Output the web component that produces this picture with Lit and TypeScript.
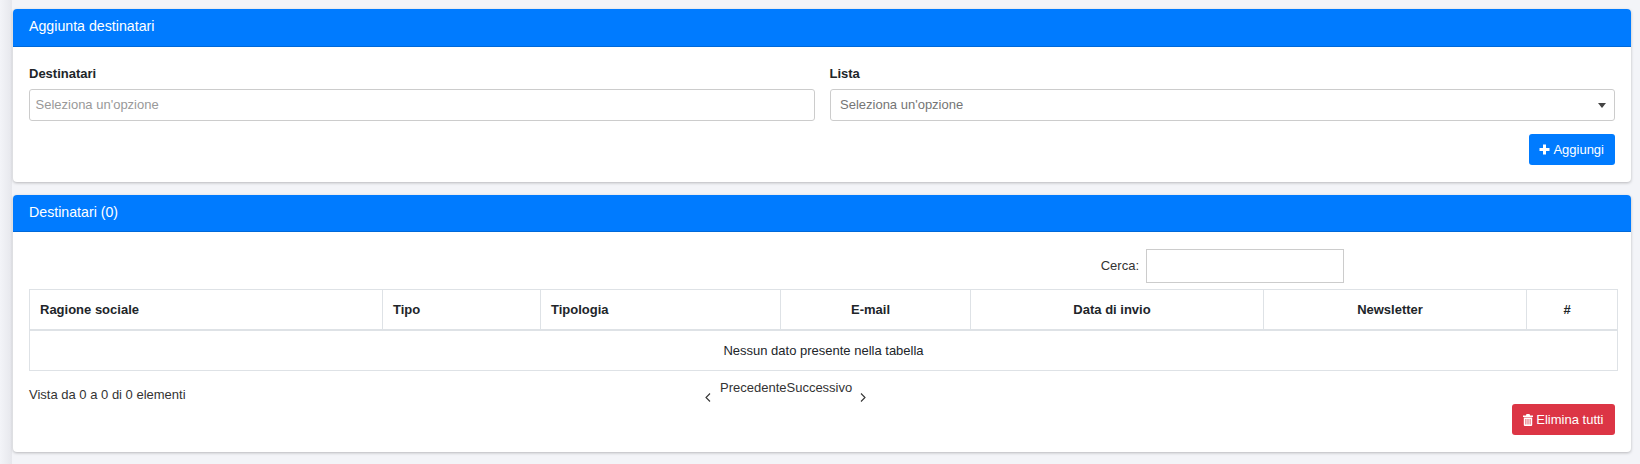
import { LitElement, html, css } from "lit";
import { customElement } from "lit/decorators.js";

@customElement("app-root")
export class AppRoot extends LitElement {
  static styles = css`
    :host { display: block; height: 464px; overflow: hidden; background: #f3f4f8; font-family: "Liberation Sans", Arial, sans-serif; font-size: 13px; color: #212529; position: relative; }
    .edge { position: absolute; left: 0; top: 0; bottom: 0; width: 12px; background: linear-gradient(to right, #f3f4f8, #e6e7ec); }
    .page { position: relative; padding: 9px 9px 0 13px; display: flex; flex-direction: column; gap: 13px; }
    .card { background: #fff; border-radius: 4px; box-shadow: 0 1px 3px rgba(0,0,0,.25); overflow: hidden; }
    .head { background: #007bff; color: #fff; height: 37.5px; padding: 0 16px 2px; display: flex; align-items: center; font-size: 14.2px; border-bottom: 1px solid #0069d9; box-sizing: border-box; }
    .head.short { height: 37px; }
    .body1 { height: 135.5px; box-sizing: border-box; padding: 19.5px 16px 0; }
    .cols { display: grid; grid-template-columns: 1fr 1fr; gap: 15px; }
    label { display: block; font-weight: 700; font-size: 13px; line-height: 16px; margin-bottom: 7px; }
    .field { height: 32px; box-sizing: border-box; border: 1px solid #ccc; border-radius: 3px; display: flex; align-items: center; color: #999; padding-bottom: 1px; }
    .f1 { padding-left: 5.5px; }
    .f2 { padding: 0 8px 1px 9.5px; justify-content: space-between; color: #757575; }
    .caret { width: 0; height: 0; margin-top: 1px; border-left: 4px solid transparent; border-right: 4px solid transparent; border-top: 5px solid #444; }
    .actions { display: flex; justify-content: flex-end; margin-top: 13px; }
    .btn { height: 31px; box-sizing: border-box; padding: 0 11px 0 10px; border-radius: 3px; color: #fff; display: flex; align-items: center; gap: 3.5px; font-size: 13px; }
    .blue { background: #007bff; }
    .red { background: #dc3545; padding: 0 11.5px 0 10.5px; }
    .body2 { height: 220px; box-sizing: border-box; padding: 17px 12px 0 16px; }
    .search { display: flex; align-items: center; justify-content: flex-end; gap: 7px; padding-right: 275px; height: 34px; margin-bottom: 6px; color: #333; }
    .search span { margin-bottom: 2px; }
    .search .box { width: 198px; height: 34px; box-sizing: border-box; border: 1px solid #ccc; }
    table { border-collapse: collapse; table-layout: fixed; width: 1588px; }
    th, td { border: 1px solid #dee2e6; padding: 0; font-size: 13px; }
    th { height: 40px; border-bottom-width: 2px; padding: 0 10px; text-align: left; font-weight: 700; box-sizing: border-box; }
    th.c { text-align: center; padding-right: 20px; }
    td { height: 41px; text-align: center; box-sizing: border-box; }
    .foot { position: relative; height: 58px; }
    .info { position: absolute; left: 0; top: 16px; line-height: 16px; color: #333; }
    .pager { position: absolute; left: 676px; top: 9px; display: flex; color: #333; }
    .pager span { line-height: 16px; }
    .arrow { margin-top: 12px; width: 6px; height: 11px; }
    .ptext { margin: 0 8px 0 9px; }
    .foot .btn { position: absolute; right: 4px; top: 33px; }
    svg { display: block; }
  `;
  render() {
    const cols: [string, number, boolean][] = [
      ["Ragione sociale", 353, false], ["Tipo", 158, false], ["Tipologia", 240, false], ["E-mail", 190, true],
      ["Data di invio", 293, true], ["Newsletter", 263, true], ["#", 91, true],
    ];
    return html`
      <div class="edge"></div>
      <div class="page">
        <section class="card">
          <div class="head">Aggiunta destinatari</div>
          <div class="body1">
            <div class="cols">
              <div><label>Destinatari</label><div class="field f1">Seleziona un'opzione</div></div>
              <div><label>Lista</label><div class="field f2"><span>Seleziona un'opzione</span><span class="caret"></span></div></div>
            </div>
            <div class="actions">
              <div class="btn blue">
                <svg width="11" height="11" viewBox="0 0 11 11"><path fill="#fff" d="M4 .5h3V4h3.5v3H7v3.5H4V7H.5V4H4z"/></svg>
                Aggiungi
              </div>
            </div>
          </div>
        </section>
        <section class="card">
          <div class="head short">Destinatari (0)</div>
          <div class="body2">
            <div class="search"><span>Cerca:</span><div class="box"></div></div>
            <table>
              <colgroup>${cols.map((c) => html`<col style="width:${c[1]}px" />`)}</colgroup>
              <tr>${cols.map((c) => html`<th class=${c[2] ? "c" : ""}>${c[0]}</th>`)}</tr>
              <tr><td colspan="7">Nessun dato presente nella tabella</td></tr>
            </table>
            <div class="foot">
              <div class="info">Vista da 0 a 0 di 0 elementi</div>
              <div class="pager">
                <svg class="arrow" viewBox="0 0 6 11"><path d="M5 1.5 1 5.5 5 9.5" fill="none" stroke="#333" stroke-width="1.1"/></svg>
                <span class="ptext">PrecedenteSuccessivo</span>
                <svg class="arrow" viewBox="0 0 6 11"><path d="M1 1.5 5 5.5 1 9.5" fill="none" stroke="#333" stroke-width="1.1"/></svg>
              </div>
              <div class="btn red">
                <svg width="10" height="12" viewBox="0.5 0 10 12"><path fill="#fff" fill-rule="evenodd" d="M4 0h3l.6 1.5H10.5V3H.5V1.5h2.900zM1.300 3.600h8.400V11a1 1 0 0 1-1 1H2.300a1 1 0 0 1-1-1zM3 5v5.500h.8V5zm2.100 0v5.500h.8V5zM7.200 5v5.500H8V5z"/></svg>
                Elimina tutti
              </div>
            </div>
          </div>
        </section>
      </div>
    `;
  }
}
